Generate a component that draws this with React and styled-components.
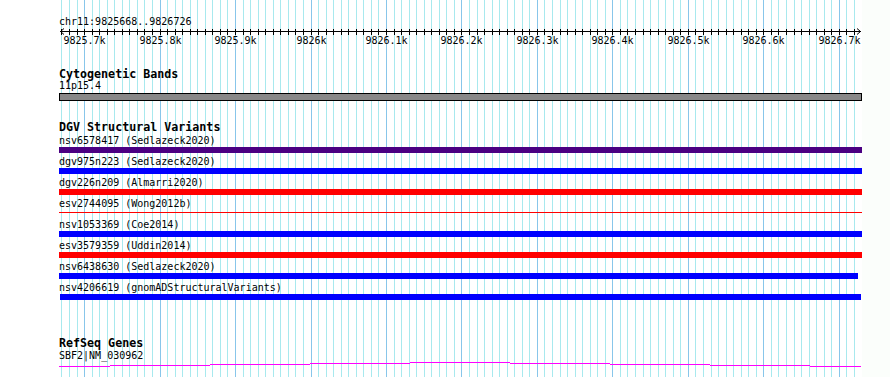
import React from 'react';
import styled, { createGlobalStyle } from 'styled-components';

const LEFT = 59;
const RIGHT = 862;
const xOf = (bp) => Math.floor(84.6 + (bp - 9825700) * 0.7547);

const gridLines = [];
for (let bp = 9825670; bp <= 9826720; bp += 10) {
  gridLines.push({ bp, x: xOf(bp), major: bp % 100 === 0 });
}
const majorLabels = gridLines
  .filter((g) => g.major)
  .map((g) => ({
    x: g.x + 0.5,
    text: g.bp % 1000 === 0 ? `${g.bp / 1000}k` : `${(g.bp / 1000).toFixed(1)}k`,
  }));

const variants = [
  { id: 'nsv6578417', src: 'Sedlazeck2020', color: '#4b0082', start: 59, end: 862 },
  { id: 'dgv975n223', src: 'Sedlazeck2020', color: '#0000ff', start: 59, end: 862 },
  { id: 'dgv226n209', src: 'Almarri2020', color: '#ff0000', start: 59, end: 862 },
  { id: 'esv2744095', src: 'Wong2012b', color: '#ff0000', start: 59, end: 862, thin: true },
  { id: 'nsv1053369', src: 'Coe2014', color: '#0000ff', start: 59, end: 862 },
  { id: 'esv3579359', src: 'Uddin2014', color: '#ff0000', start: 59, end: 862 },
  { id: 'nsv6438630', src: 'Sedlazeck2020', color: '#0000ff', start: 59, end: 858 },
  { id: 'nsv4206619', src: 'gnomADStructuralVariants', color: '#0000ff', start: 60, end: 861 },
];

const GENE_TOP = 361;
const geneSegments = [
  [59, 110, 366],
  [110, 210, 365],
  [210, 310, 364],
  [310, 410, 363],
  [410, 510, 362],
  [510, 610, 363],
  [610, 710, 364],
  [710, 810, 365],
  [810, 861, 366],
];

const GlobalStyle = createGlobalStyle`
  html, body { margin: 0; padding: 0; background: #ffffff; }
  * { box-sizing: border-box; }
`;

const Page = styled.div`
  position: relative;
  width: 890px;
  height: 377px;
  overflow: hidden;
  background: linear-gradient(to right, #ffffff ${RIGHT}px, #fbfefb ${RIGHT}px);
  font-family: "DejaVu Sans Mono", "Liberation Mono", monospace;
  color: #000;
`;

const GridLayer = styled.svg`
  position: absolute;
  left: 0;
  top: 0;
  width: 890px;
  height: 377px;
  pointer-events: none;
`;

const Content = styled.div`
  position: relative;
  display: flex;
  flex-direction: column;
  width: ${RIGHT}px;
  padding-left: ${LEFT}px;
`;

const PositionLabel = styled.div`
  margin-top: 17px;
  font-size: 10px;
  line-height: 10px;
  height: 10px;
  white-space: pre;
`;

const RulerSvg = styled.svg`
  display: block;
  width: ${RIGHT - LEFT}px;
  height: 20px;
  overflow: visible;
`;

const RulerText = styled.text`
  font-family: "DejaVu Sans Mono", "Liberation Mono", monospace;
  font-size: 10px;
  fill: #000;
`;

const TrackTitle = styled.div`
  margin-top: ${(p) => p.$gap}px;
  font-size: 11.67px;
  font-weight: bold;
  line-height: 12px;
  height: 12px;
  white-space: pre;
`;

const ItemLabel = styled.div`
  margin-top: ${(p) => p.$gap || 0}px;
  font-size: 10px;
  line-height: 10px;
  height: 10px;
  white-space: pre;
`;

const BandBar = styled.div`
  margin-top: 2px;
  height: 8px;
  width: ${RIGHT - LEFT}px;
  border: 1px solid #000;
  background: #888888;
`;

const VariantList = styled.div`
  display: flex;
  flex-direction: column;
  margin-top: 3px;
`;

const VariantRow = styled.div`
  display: flex;
  flex-direction: column;
  height: 21px;
`;

const BarSlot = styled.div`
  margin-top: 1px;
  height: 6px;
  display: flex;
  align-items: ${(p) => (p.$thin ? 'center' : 'stretch')};
`;

const Bar = styled.div`
  margin-left: ${(p) => p.$start - LEFT}px;
  width: ${(p) => p.$end - p.$start}px;
  height: ${(p) => (p.$thin ? 1 : 6)}px;
  margin-top: ${(p) => (p.$thin ? -1 : 0)}px;
  background: ${(p) => p.$color};
`;

const GeneSvg = styled.svg`
  display: block;
  width: ${RIGHT - LEFT}px;
  height: 8px;
`;

function Ruler() {
  const lineY = 4;
  const x0 = 60 - LEFT;
  const x1 = 861 - LEFT;
  return (
    <RulerSvg viewBox={`0 0 ${RIGHT - LEFT} 20`}>
      <rect x={x0} y={lineY} width={x1 - x0} height={1} fill="#000" />
      {gridLines.map((g) => (
        <rect key={g.bp} x={g.x - LEFT} y={2} width={1} height={6} fill="#000" />
      ))}
      <polyline
        points={`${x0 + 4},${lineY - 2.5} ${x0 + 0.5},${lineY + 0.5} ${x0 + 4},${lineY + 3.5}`}
        fill="none"
        stroke="#000"
        strokeWidth="1"
      />
      <polyline
        points={`${x1 - 4},${lineY - 2.5} ${x1 - 0.5},${lineY + 0.5} ${x1 - 4},${lineY + 3.5}`}
        fill="none"
        stroke="#000"
        strokeWidth="1"
      />
      {majorLabels.map((l) => (
        <RulerText key={l.text} x={l.x - LEFT} y={17} textAnchor="middle">
          {l.text}
        </RulerText>
      ))}
    </RulerSvg>
  );
}

export default function App() {
  return (
    <>
      <GlobalStyle />
      <Page>
        <GridLayer viewBox="0 0 890 377">
          {gridLines.map((g) => (
            <rect
              key={g.bp}
              x={g.x}
              y={0}
              width={1}
              height={377}
              fill={g.major ? '#88c6ea' : '#a8e9ee'}
            />
          ))}
        </GridLayer>
        <Content>
          <PositionLabel>chr11:9825668..9826726</PositionLabel>
          <Ruler />

          <TrackTitle $gap={21}>Cytogenetic Bands</TrackTitle>
          <ItemLabel $gap={1}>11p15.4</ItemLabel>
          <BandBar />

          <TrackTitle $gap={20}>DGV Structural Variants</TrackTitle>
          <VariantList>
            {variants.map((v) => (
              <VariantRow key={v.id}>
                <ItemLabel>{`${v.id} (${v.src})`}</ItemLabel>
                <BarSlot $thin={v.thin}>
                  <Bar $start={v.start} $end={v.end} $color={v.color} $thin={v.thin} />
                </BarSlot>
              </VariantRow>
            ))}
          </VariantList>

          <TrackTitle $gap={33}>RefSeq Genes</TrackTitle>
          <ItemLabel $gap={2}>SBF2|NM_030962</ItemLabel>
          <GeneSvg viewBox={`0 0 ${RIGHT - LEFT} 8`}>
            {geneSegments.map(([a, b, y]) => (
              <rect key={a} x={a - LEFT} y={y - GENE_TOP} width={b - a} height={1} fill="#ff00ff" />
            ))}
          </GeneSvg>
        </Content>
      </Page>
    </>
  );
}
